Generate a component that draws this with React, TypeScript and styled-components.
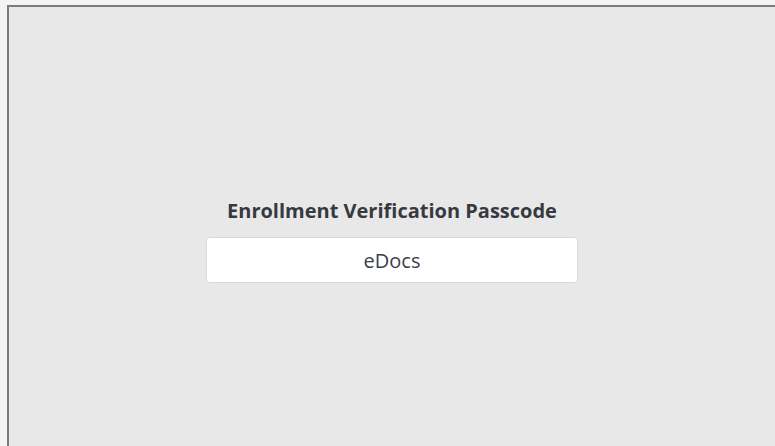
import styled, { createGlobalStyle } from "styled-components";

const GlobalStyle = createGlobalStyle`
  html, body {
    margin: 0;
    padding: 0;
    height: 100%;
    background: #f4f4f4;
  }
  #root {
    height: 100%;
  }
`;

export default function App(): JSX.Element {
  return (
    <>
      <GlobalStyle />
      <Page>
        <Screen>
          <Title>Enrollment Verification Passcode</Title>
          <PasscodeField>eDocs</PasscodeField>
        </Screen>
      </Page>
    </>
  );
}

const Page = styled.div`
  height: 100%;
  box-sizing: border-box;
  padding: 5px 0 0 7px;
  display: flex;
`;

const Screen = styled.main`
  flex: 1;
  display: flex;
  flex-direction: column;
  align-items: center;
  padding-top: 192px;
  background: #e8e8e8;
  border-top: 2px solid #7b7b7b;
  border-left: 2px solid #7b7b7b;
  font-family: "Open Sans", "Noto Sans", sans-serif;
`;

const Title = styled.h1`
  margin: 0 0 14px;
  font-size: 20px;
  line-height: 24px;
  font-weight: 700;
  color: #363a40;
`;

const PasscodeField = styled.div`
  width: 372px;
  height: 46px;
  box-sizing: border-box;
  display: flex;
  align-items: center;
  justify-content: center;
  background: #ffffff;
  border: 1px solid #dadada;
  border-radius: 3px;
  font-size: 20px;
  color: #3c4048;
`;
